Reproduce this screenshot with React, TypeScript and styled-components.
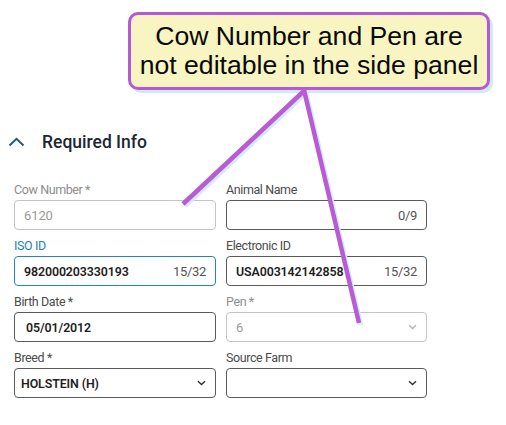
import React from "react";
import styled, { createGlobalStyle } from "styled-components";

const Global = createGlobalStyle`
  html, body { margin: 0; padding: 0; background: #ffffff; }
  body { font-family: Roboto, "Noto Sans", Arial, sans-serif; }
`;

const Page = styled.div`
  position: relative;
  width: 506px;
  height: 425px;
  overflow: hidden;
  background: #fff;
`;

const CalloutRow = styled.div`
  display: flex;
  padding: 12px 0 0 128px;
`;

const Callout = styled.div`
  box-sizing: border-box;
  width: 362px;
  height: 78px;
  border: 3.5px solid #b55ad2;
  border-radius: 10px;
  background: #f8f5c2;
  box-shadow: 3px 3px 0 #d3e8fb;
  display: flex;
  align-items: center;
  justify-content: center;
  text-align: center;
  font-family: "Liberation Sans", Arial, sans-serif;
  font-size: 26.6px;
  line-height: 29px;
  color: #0a0a0a;
`;

const SectionHeader = styled.div`
  display: flex;
  align-items: center;
  gap: 17px;
  margin: 41px 0 0 8px;
  height: 22px;
  font-size: 17.5px;
  font-weight: 500;
  color: #1b2733;
`;

const Grid = styled.div`
  display: grid;
  grid-template-columns: 202px 201px;
  column-gap: 10px;
  row-gap: 8px;
  margin: 29px 0 0 14px;
`;

const Field = styled.div`
  display: flex;
  flex-direction: column;
  gap: 2px;
`;

type Tone = "normal" | "disabled" | "focused";

const Label = styled.div<{ $tone: Tone }>`
  height: 16px;
  line-height: 16px;
  font-size: 12.5px;
  letter-spacing: -0.4px;
  color: ${(p) =>
    p.$tone === "disabled" ? "#8d8d8d" : p.$tone === "focused" ? "#1f7fc4" : "#4b4b4b"};
`;

const Box = styled.div<{ $tone: Tone; $pad: number }>`
  box-sizing: border-box;
  height: 30px;
  display: flex;
  align-items: center;
  justify-content: space-between;
  padding: 0 9px 0 ${(p) => p.$pad}px;
  border: 1px solid
    ${(p) =>
      p.$tone === "disabled" ? "#c4c4c4" : p.$tone === "focused" ? "#2283c8" : "#5a5a5a"};
  border-radius: 4px;
  background: #fff;
`;

const Value = styled.span<{ $tone: Tone; $bold?: boolean }>`
  font-size: ${(p) => (p.$tone === "disabled" ? 13 : 12.4)}px;
  font-weight: ${(p) => (p.$tone === "disabled" ? 400 : 600)};
  color: ${(p) => (p.$tone === "disabled" ? "#9a9a9a" : "#1e1e1e")};
  letter-spacing: -0.1px;
`;

const Counter = styled.span`
  font-size: 13px;
  color: #555;
  letter-spacing: -0.3px;
`;

const Chevron = ({ color }: { color: string }) => (
  <svg width="9" height="6" viewBox="0 0 9 6">
    <path d="M1 1.2 L4.5 4.6 L8 1.2" fill="none" stroke={color} strokeWidth="1.4" />
  </svg>
);

const Pointers = styled.svg`
  position: absolute;
  left: 0;
  top: 0;
  pointer-events: none;
`;

type FieldDef = {
  label: string;
  value?: string;
  tone: Tone;
  counter?: string;
  select?: boolean;
  pad?: number;
};

const fields: FieldDef[] = [
  { label: "Cow Number *", value: "6120", tone: "disabled" },
  { label: "Animal Name", tone: "normal", counter: "0/9" },
  { label: "ISO ID", value: "982000203330193", tone: "focused", counter: "15/32" },
  { label: "Electronic ID", value: "USA003142142858", tone: "normal", counter: "15/32" },
  { label: "Birth Date *", value: "05/01/2012", tone: "normal", pad: 11 },
  { label: "Pen *", value: "6", tone: "disabled", select: true },
  { label: "Breed *", value: "HOLSTEIN (H)", tone: "normal", select: true, pad: 6 },
  { label: "Source Farm", tone: "normal", select: true },
];

export default function App() {
  return (
    <Page>
      <Global />
      <CalloutRow>
        <Callout>
          Cow Number and Pen are
          <br />
          not editable in the side panel
        </Callout>
      </CalloutRow>
      <SectionHeader>
        <svg width="17" height="10" viewBox="0 0 17 10">
          <path d="M1.5 8.5 L8.5 1.8 L15.5 8.5" fill="none" stroke="#1d5a88" strokeWidth="2" />
        </svg>
        Required Info
      </SectionHeader>
      <Grid>
        {fields.map((f) => (
          <Field key={f.label}>
            <Label $tone={f.tone}>{f.label}</Label>
            <Box $tone={f.tone} $pad={f.pad ?? 9}>
              <Value $tone={f.tone}>{f.value ?? ""}</Value>
              {f.counter && <Counter>{f.counter}</Counter>}
              {f.select && <Chevron color={f.tone === "disabled" ? "#b5b5b5" : "#333"} />}
            </Box>
          </Field>
        ))}
      </Grid>
      <Pointers width="506" height="425" viewBox="0 0 506 425">
        <g stroke="#d6e9fb" strokeWidth="4.5" strokeLinecap="butt">
          <line x1="307" y1="92" x2="185" y2="206" />
          <line x1="306" y1="92" x2="361" y2="325" />
        </g>
        <g stroke="#b95cd4" strokeWidth="4.5" strokeLinecap="butt">
          <line x1="305" y1="90" x2="183" y2="204" />
          <line x1="304" y1="90" x2="359" y2="323" />
        </g>
      </Pointers>
    </Page>
  );
}
